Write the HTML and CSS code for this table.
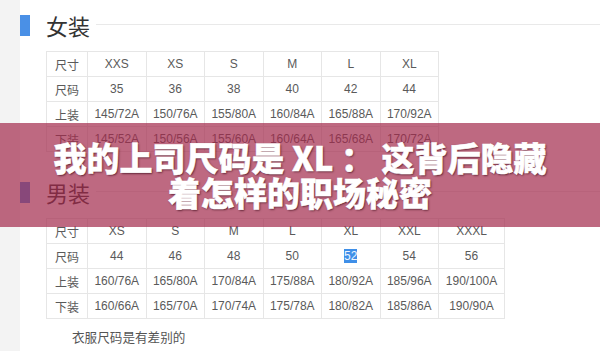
FILE: index.html
```html
<!DOCTYPE html>
<html lang="zh-CN">
<head>
<meta charset="utf-8">
<link rel="stylesheet" href="styles.css">
</head>
<body>
<div class="page">
  <aside class="rail"></aside>
  <main class="content">
    <section class="size-section">
      <header class="sec-head"><span class="bar"></span><h2 class="sec-title">女装</h2><span class="rule"></span></header>
      <table class="size-table">
        <colgroup><col class="c-label"><col class="c-w"><col class="c-w"><col class="c-w"><col class="c-w"><col class="c-w"><col class="c-w"></colgroup>
        <tr><td>尺寸</td><td>XXS</td><td>XS</td><td>S</td><td>M</td><td>L</td><td>XL</td></tr>
        <tr><td>尺码</td><td>35</td><td>36</td><td>38</td><td>40</td><td>42</td><td>44</td></tr>
        <tr><td>上装</td><td>145/72A</td><td>150/76A</td><td>155/80A</td><td>160/84A</td><td>165/88A</td><td>170/92A</td></tr>
        <tr><td>下装</td><td>145/52A</td><td>150/56A</td><td>155/60A</td><td>160/64A</td><td>165/68A</td><td>170/72A</td></tr>
      </table>
    </section>
    <section class="size-section men">
      <header class="sec-head"><span class="bar"></span><h2 class="sec-title">男装</h2><span class="rule"></span></header>
      <table class="size-table">
        <colgroup><col class="c-label"><col class="c-w"><col class="c-w"><col class="c-w"><col class="c-w"><col class="c-w"><col class="c-w"><col class="c-wide"></colgroup>
        <tr><td>尺寸</td><td>XS</td><td>S</td><td>M</td><td>L</td><td>XL</td><td>XXL</td><td>XXXL</td></tr>
        <tr><td>尺码</td><td>44</td><td>46</td><td>48</td><td>50</td><td><span class="sel">52</span></td><td>54</td><td>56</td></tr>
        <tr><td>上装</td><td>160/76A</td><td>165/80A</td><td>170/84A</td><td>175/88A</td><td>180/92A</td><td>185/96A</td><td>190/100A</td></tr>
        <tr><td>下装</td><td>160/66A</td><td>165/70A</td><td>170/74A</td><td>175/78A</td><td>180/82A</td><td>185/86A</td><td>190/90A</td></tr>
      </table>
    </section>
    <p class="note">衣服尺码是有差别的</p>
  </main>
</div>
<div class="banner">
  <h1 class="banner-title">我的上司尺码是 XL ： 这背后隐藏<br>着怎样的职场秘密</h1>
</div>
</body>
</html>
```

FILE: styles.css
```css
html, body {
  margin: 0;
  padding: 0;
  background: #fff;
  font-family: "Liberation Sans", "Noto Sans CJK SC", sans-serif;
}
.page {
  display: flex;
  width: 600px;
  height: 351px;
  overflow: hidden;
}
.rail {
  width: 20px;
  flex: none;
  background: #f3f3f3;
}
.content {
  flex: 1;
  padding-top: 15px;
}
.sec-head {
  display: flex;
  align-items: center;
  height: 21px;
}
.bar {
  width: 10px;
  height: 21px;
  background: #4a90e6;
  flex: none;
}
.sec-title {
  margin: 0 6px 0 16px;
  font-size: 22px;
  font-weight: normal;
  line-height: 21px;
  color: #333;
  font-family: "Noto Sans CJK SC", sans-serif;
}
.rule {
  flex: 1;
  height: 1px;
  background: #e9e9e9;
  margin-top: -3px;
}
.size-table {
  margin: 15px 0 0 26px;
  border-collapse: collapse;
  table-layout: fixed;
  font-size: 12px;
  color: #5a5a5a;
}
.c-label { width: 41px; }
.c-w { width: 58.5px; }
.c-wide { width: 66px; }
.size-table td {
  border: 1px solid #e6e6e6;
  height: 24px;
  padding: 0;
  text-align: center;
  vertical-align: middle;
}
.men {
  margin-top: 30px;
}
.sel {
  background: #3f8fe8;
  color: #eef5ff;
}
.note {
  margin: 9px 0 0 52px;
  font-size: 12.6px;
  line-height: 18px;
  color: #555;
  font-family: "Noto Sans CJK SC", sans-serif;
}
.banner {
  position: absolute;
  top: 123px;
  left: 0;
  width: 600px;
  height: 104px;
  background: rgba(162, 42, 76, 0.7);
  display: flex;
  align-items: center;
  justify-content: center;
}
.banner-title {
  margin: 0;
  font-family: "Noto Sans CJK SC", sans-serif;
  font-size: 33px;
  font-weight: 900;
  line-height: 35px;
  color: #fff;
  text-align: center;
  -webkit-text-stroke: 0.5px #fff;
  text-shadow: 1px 1px 2px rgba(50, 0, 15, 0.7);
}
```
